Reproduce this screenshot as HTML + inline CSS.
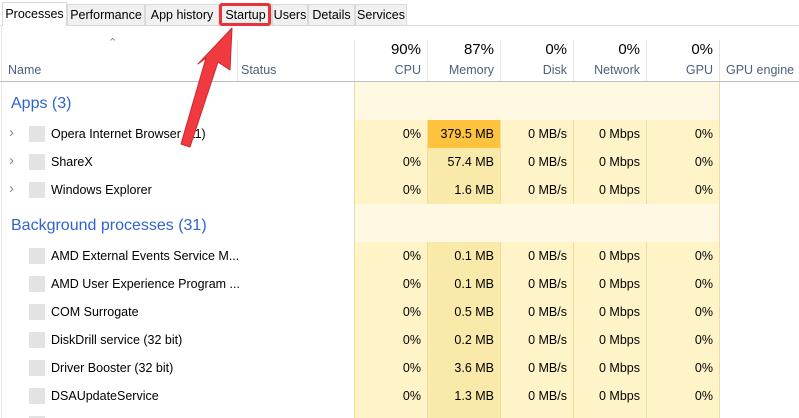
<!DOCTYPE html>
<html style="overflow:hidden;height:418px"><head><meta charset="utf-8"><style>
*{margin:0;padding:0;box-sizing:border-box}
body{width:799px;height:418px;overflow:hidden;background:#fff;font-family:"Liberation Sans",sans-serif;font-size:12.5px;color:#000;position:relative}
.a{position:absolute}
.tab{position:absolute;top:4px;height:21px;background:#f0f0f0;border:1px solid #d9d9d9;border-bottom:none;padding-top:3px;text-align:center;font-size:12.5px;white-space:nowrap}
.r{text-align:right}
.sep{position:absolute;width:1px;background:#e5e5e5;top:40px;height:41px}
.col{position:absolute;top:82px;height:336px;background:#fff4c8;border-left:1px solid #f0dca0}
.hdr{position:absolute;left:355px;width:364px;background:#fff8e3}
.row{position:absolute;left:0;width:799px;height:28px;overflow:hidden}
.row .ic{position:absolute;left:29px;top:6px;width:16px;height:16px;background:#e3e3e3}
.row .nm{position:absolute;left:51px;top:7px;white-space:nowrap}
.row .c{position:absolute;top:7px;text-align:right}
.chev{position:absolute;left:9px;top:4px;color:#888;font-size:15px}
</style></head><body>
<div class="a" style="left:0;top:25px;width:799px;height:1px;background:#d9d9d9"></div>
<div class="a" style="left:1px;top:25px;width:1px;height:393px;background:#e8e8e8"></div>
<div class="tab" style="left:2px;top:2px;height:24px;width:65px;background:#fff;padding-top:4px">Processes</div>
<div class="tab" style="left:67px;width:78px">Performance</div>
<div class="tab" style="left:145px;width:74px">App history</div>
<div class="tab" style="left:219px;width:53px">Startup</div>
<div class="tab" style="left:272px;width:36px">Users</div>
<div class="tab" style="left:308px;width:47px">Details</div>
<div class="tab" style="left:355px;width:52px">Services</div>
<div class="a" style="left:219px;top:3px;width:52px;height:23px;border:3px solid #e8333b;border-radius:3px"></div>

<div class="a" style="left:108px;top:36px;color:#888;font-size:11px">&#8963;</div>
<div class="a" style="left:8px;top:63px;color:#4c607a">Name</div>
<div class="a" style="left:241px;top:63px;color:#4c607a">Status</div>
<div class="sep" style="left:237px"></div>
<div class="sep" style="left:354px"></div><div class="sep" style="left:427px"></div><div class="sep" style="left:500px"></div><div class="sep" style="left:573px"></div><div class="sep" style="left:646px"></div><div class="sep" style="left:719px"></div>
<div class="a r" style="left:354px;width:67px;top:41px;font-size:15px">90%</div>
<div class="a r" style="left:427px;width:67px;top:41px;font-size:15px">87%</div>
<div class="a r" style="left:500px;width:67px;top:41px;font-size:15px">0%</div>
<div class="a r" style="left:573px;width:67px;top:41px;font-size:15px">0%</div>
<div class="a r" style="left:646px;width:67px;top:41px;font-size:15px">0%</div>
<div class="a r" style="left:354px;width:67px;top:63px;color:#4c607a">CPU</div>
<div class="a r" style="left:427px;width:67px;top:63px;color:#4c607a">Memory</div>
<div class="a r" style="left:500px;width:67px;top:63px;color:#4c607a">Disk</div>
<div class="a r" style="left:573px;width:67px;top:63px;color:#4c607a">Network</div>
<div class="a r" style="left:646px;width:67px;top:63px;color:#4c607a">GPU</div>
<div class="a" style="left:726px;top:63px;color:#4c607a">GPU engine</div>
<div class="a" style="left:0;top:81px;width:799px;height:1px;background:#bcbcbc"></div>

<div class="col" style="left:354px;width:73px"></div>
<div class="col" style="left:427px;width:73px;background:#f9eaaa"></div>
<div class="col" style="left:500px;width:73px"></div>
<div class="col" style="left:573px;width:73px"></div>
<div class="col" style="left:646px;border-right:1px solid #f0dca0;width:74px"></div>
<div class="hdr" style="top:82px;height:38px"></div>
<div class="hdr" style="top:204px;height:38px"></div>
<div class="a" style="left:11px;top:95px;font-size:16px;color:#2f63d0">Apps (3)</div>
<div class="a" style="left:11px;top:217px;font-size:16px;color:#2f63d0">Background processes (31)</div>

<div class="a" style="left:428px;top:120px;width:72px;height:28px;background:#fdc33e"></div>

<div class="row" style="top:120px"><span class="chev">&#8250;</span><div class="ic"></div><div class="nm">Opera Internet Browser (11)</div><div class="c" style="left:354px;width:67px">0%</div><div class="c" style="left:427px;width:67px">379.5 MB</div><div class="c" style="left:500px;width:67px">0 MB/s</div><div class="c" style="left:573px;width:67px">0 Mbps</div><div class="c" style="left:646px;width:67px">0%</div></div>
<div class="row" style="top:148px"><span class="chev">&#8250;</span><div class="ic"></div><div class="nm">ShareX</div><div class="c" style="left:354px;width:67px">0%</div><div class="c" style="left:427px;width:67px">57.4 MB</div><div class="c" style="left:500px;width:67px">0 MB/s</div><div class="c" style="left:573px;width:67px">0 Mbps</div><div class="c" style="left:646px;width:67px">0%</div></div>
<div class="row" style="top:176px"><span class="chev">&#8250;</span><div class="ic"></div><div class="nm">Windows Explorer</div><div class="c" style="left:354px;width:67px">0%</div><div class="c" style="left:427px;width:67px">1.6 MB</div><div class="c" style="left:500px;width:67px">0 MB/s</div><div class="c" style="left:573px;width:67px">0 Mbps</div><div class="c" style="left:646px;width:67px">0%</div></div>

<div class="row" style="top:242px"><div class="ic"></div><div class="nm">AMD External Events Service M...</div><div class="c" style="left:354px;width:67px">0%</div><div class="c" style="left:427px;width:67px">0.1 MB</div><div class="c" style="left:500px;width:67px">0 MB/s</div><div class="c" style="left:573px;width:67px">0 Mbps</div><div class="c" style="left:646px;width:67px">0%</div></div>
<div class="row" style="top:270px"><div class="ic"></div><div class="nm">AMD User Experience Program ...</div><div class="c" style="left:354px;width:67px">0%</div><div class="c" style="left:427px;width:67px">0.1 MB</div><div class="c" style="left:500px;width:67px">0 MB/s</div><div class="c" style="left:573px;width:67px">0 Mbps</div><div class="c" style="left:646px;width:67px">0%</div></div>
<div class="row" style="top:298px"><div class="ic"></div><div class="nm">COM Surrogate</div><div class="c" style="left:354px;width:67px">0%</div><div class="c" style="left:427px;width:67px">0.5 MB</div><div class="c" style="left:500px;width:67px">0 MB/s</div><div class="c" style="left:573px;width:67px">0 Mbps</div><div class="c" style="left:646px;width:67px">0%</div></div>
<div class="row" style="top:326px"><div class="ic"></div><div class="nm">DiskDrill service (32 bit)</div><div class="c" style="left:354px;width:67px">0%</div><div class="c" style="left:427px;width:67px">0.2 MB</div><div class="c" style="left:500px;width:67px">0 MB/s</div><div class="c" style="left:573px;width:67px">0 Mbps</div><div class="c" style="left:646px;width:67px">0%</div></div>
<div class="row" style="top:354px"><div class="ic"></div><div class="nm">Driver Booster (32 bit)</div><div class="c" style="left:354px;width:67px">0%</div><div class="c" style="left:427px;width:67px">3.6 MB</div><div class="c" style="left:500px;width:67px">0 MB/s</div><div class="c" style="left:573px;width:67px">0 Mbps</div><div class="c" style="left:646px;width:67px">0%</div></div>
<div class="row" style="top:382px"><div class="ic"></div><div class="nm">DSAUpdateService</div><div class="c" style="left:354px;width:67px">0%</div><div class="c" style="left:427px;width:67px">1.3 MB</div><div class="c" style="left:500px;width:67px">0 MB/s</div><div class="c" style="left:573px;width:67px">0 Mbps</div><div class="c" style="left:646px;width:67px">0%</div></div>
<div class="row" style="top:410px;height:8px"><div class="ic"></div></div>

<svg class="a" style="left:0;top:0" width="799" height="418">
<polygon points="232,28 230,70 218,62 190,147 181,144 206,58 198,64" fill="#f03a40" stroke="#c92a30" stroke-width="1" stroke-linejoin="round"/>
</svg>
</body></html>
